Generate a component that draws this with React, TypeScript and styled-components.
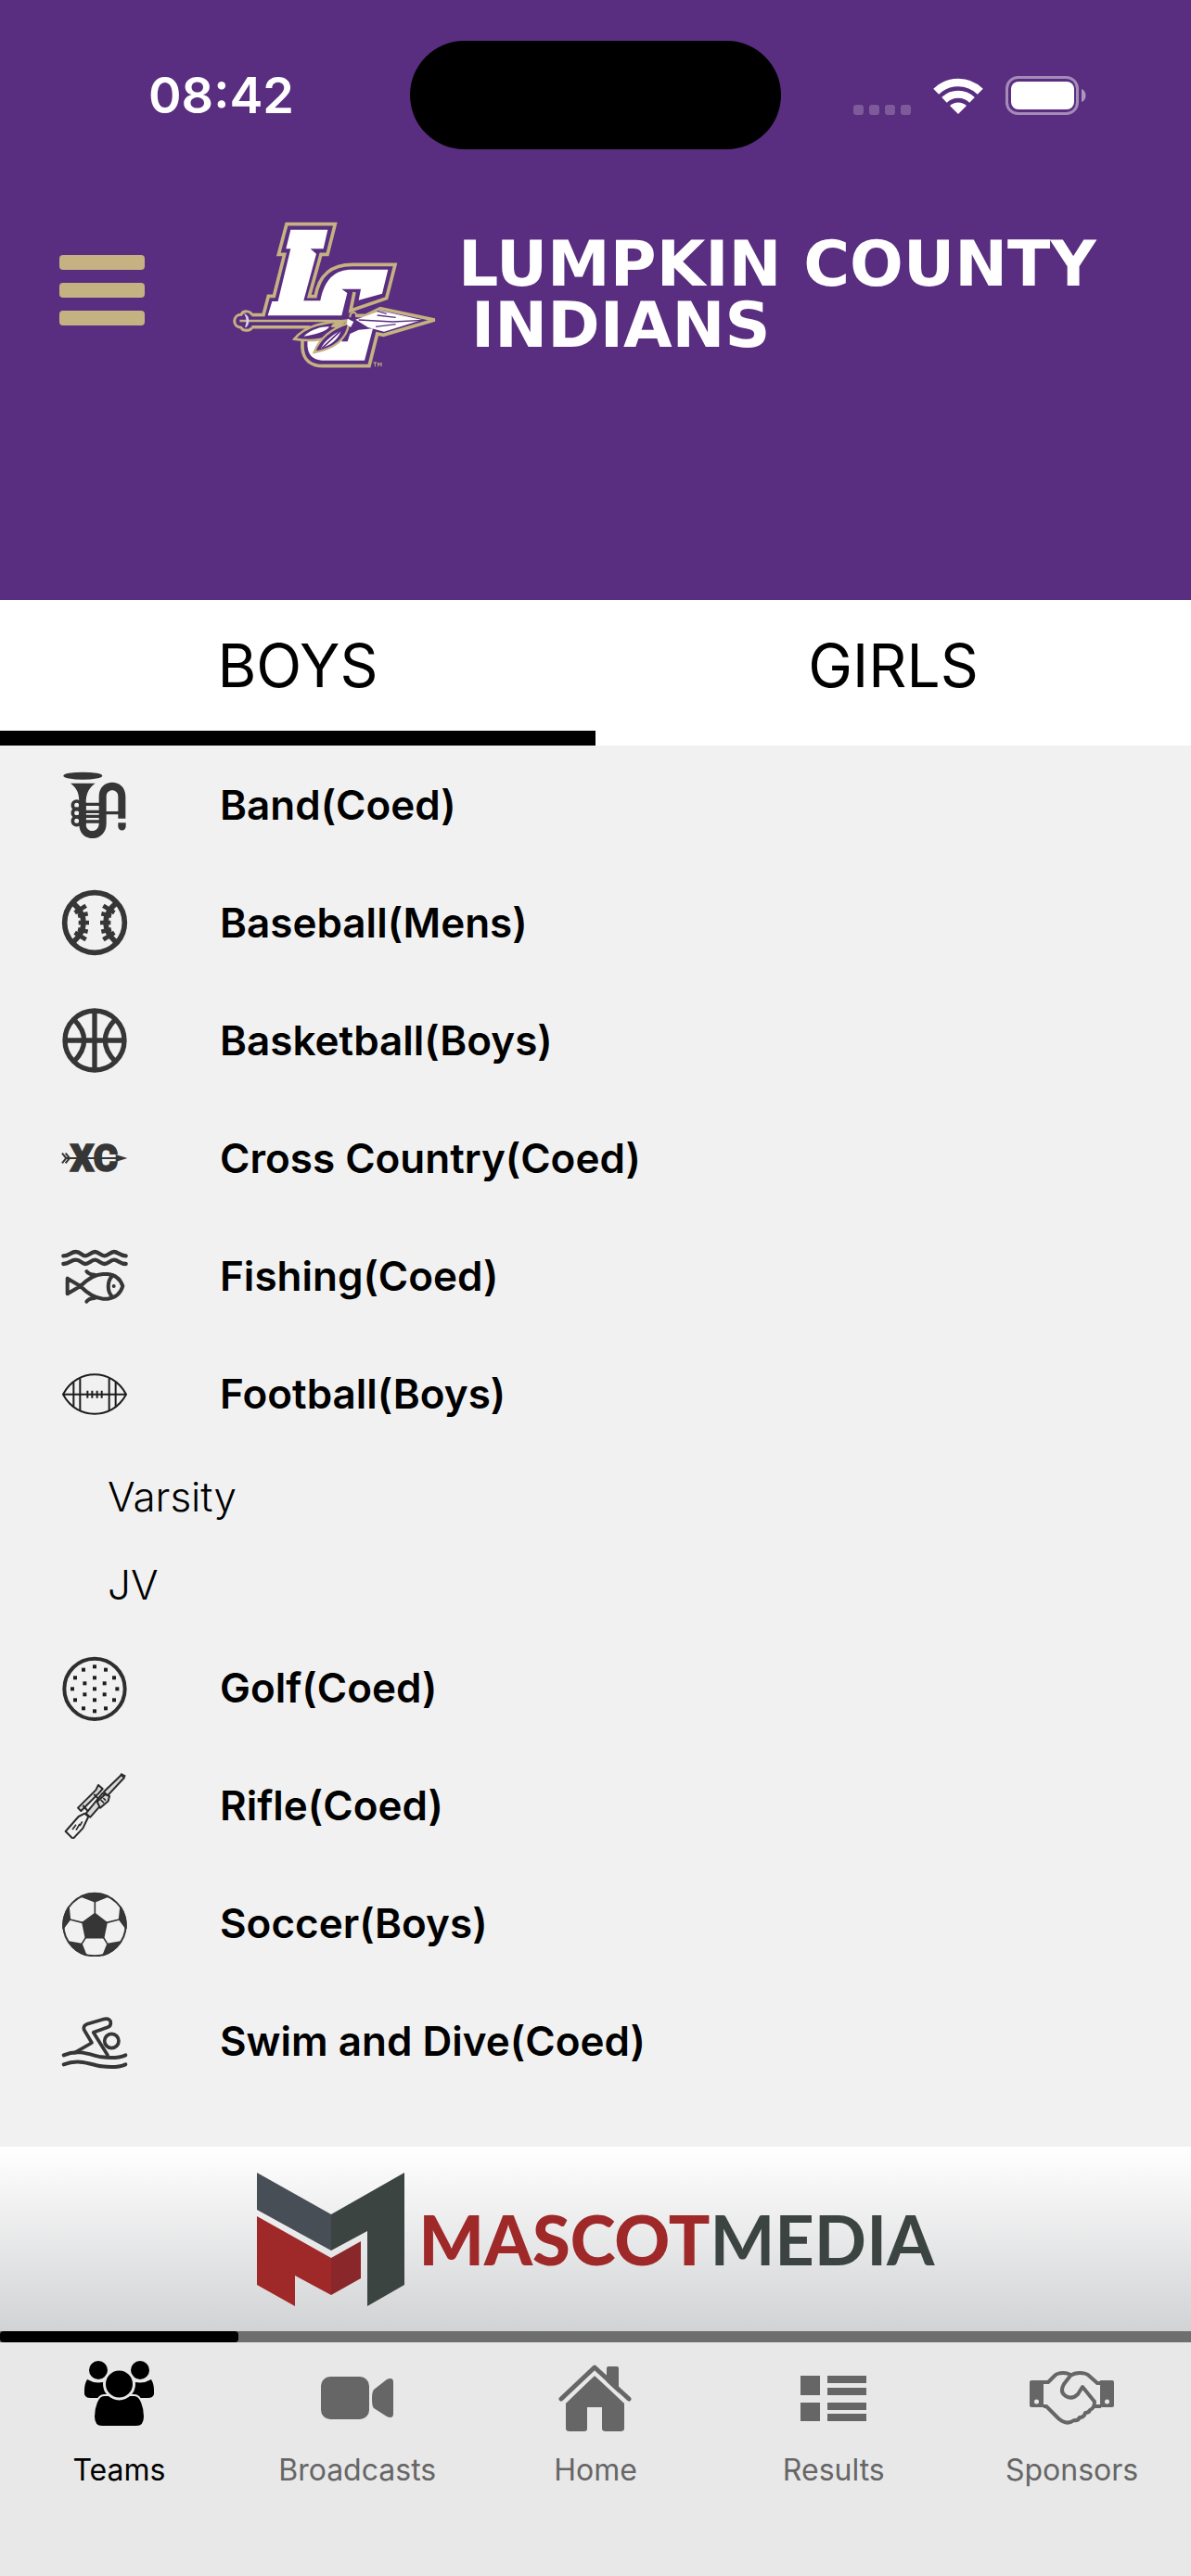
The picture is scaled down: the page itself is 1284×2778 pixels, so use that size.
import React, { FC, ReactNode, useState } from 'react'
import styled, { createGlobalStyle } from 'styled-components'

const colors = {
  purple: '#592d7f',
  gold: '#c4b282',
  listBg: '#f1f1f1',
  barBg: '#e8e8e8',
  muted: '#666666',
  icon: '#363636'
}

const GlobalStyle = createGlobalStyle`
  body {
    margin: 0;
    font-family: Inter, 'Liberation Sans', sans-serif;
    color: #000;
    background-color: ${colors.listBg};
  }

  button {
    border: 0;
    padding: 0;
    background: none;
    color: inherit;
    font: inherit;
    cursor: pointer;
  }
`

/* Status bar icons */

const WifiIcon = () => (
  <svg width="54" height="41" viewBox="0 0 54 41" fill="none" stroke="#fff" aria-hidden>
    <path d="M3.2 15.8a34 34 0 0 1 47.6 0" strokeWidth="8.5" />
    <path d="M12 24.8a21.5 21.5 0 0 1 30 0" strokeWidth="8" />
    <path d="M27 40l-9-9a13 13 0 0 1 18 0z" fill="#fff" stroke="none" />
  </svg>
)

const BatteryIcon = () => (
  <svg width="87" height="42" viewBox="0 0 87 42" aria-hidden>
    <rect x="1.5" y="1.5" width="76" height="39" rx="12" fill="none" stroke="#fff" strokeOpacity=".45" strokeWidth="3" />
    <rect x="6" y="6" width="68" height="30" rx="8" fill="#fff" />
    <path d="M82 14c6 2 6 12 0 14z" fill="#fff" fillOpacity=".5" />
  </svg>
)

/* Team logo */

const TeamLogo = () => (
  <svg width="240" height="180" viewBox="0 0 720 540" fill="none" strokeLinejoin="miter" role="img" aria-label="LC">
    <g stroke={colors.gold} strokeWidth="11">
      <path d="M94 344H132L148 283H166L200 148H181L207 50H364L339 148H318L280 284H300C312 215 350 181 420 181H558L530 290L414 330L426 270" />
      <path d="M94 383H275L258 425V450C260 488 285 509 325 509H474L500 405L520 409L686 360L510 323L462 346H430" />
    </g>
    <path
      d="M146 346L160 300H179L220 130H205L220 68H340L326 130H284L303 146L262 298H316C330 228 362 197 420 197H535L516 275L440 296L447 260H385L403 273L385 346z"
      fill="#fff"
    />
    <path d="M275 425C270 470 290 491 330 491H459L486 388L440 392L412 405L404 430H385L400 380z" fill="#fff" />
    <path d="M60 350H405V378H60z" fill={colors.purple} />
    <path d="M55 363H380" stroke={colors.gold} strokeWidth="8" />
    <path
      d="M94 344C92 330 66 328 60 343C32 343 30 383 60 385C66 398 92 396 94 384"
      stroke={colors.gold}
      strokeWidth="9"
    />
    <path d="M74 344C86 352 86 374 74 383C80 370 80 356 74 344z" fill="#fff" stroke="#d9d0ee" strokeWidth="4" />
    <path d="M232 422C270 375 330 368 405 362C385 410 320 436 232 422z" fill={colors.purple} stroke={colors.gold} strokeWidth="8" />
    <path d="M262 413C290 388 325 380 345 382C335 398 300 408 262 413z" fill="#fff" />
    <path d="M350 383C355 366 380 362 402 364L375 385z" fill={colors.gold} />
    <path d="M296 465C315 415 360 385 408 370C404 420 360 455 296 465z" fill={colors.purple} stroke={colors.gold} strokeWidth="7" />
    <path d="M318 452C330 428 356 408 384 394C372 425 350 442 318 452z" fill="#fff" />
    <path d="M322 451L385 392M300 414L350 388" stroke={colors.purple} strokeWidth="5" />
    <path d="M430 359L470 345L510 330L645 360L522 398L470 384z" fill="#fff" />
    <path d="M440 360L550 366L650 361M500 345L560 352M495 382L560 374M500 331L530 340" stroke={colors.purple} strokeWidth="4" />
    <path d="M404 356L424 366L414 384L402 374z" fill="#fff" />
    <path d="M412 352C412 332 436 330 432 350" stroke={colors.gold} strokeWidth="6" />
    <path d="M487 498H499M493 498V511M503 511V498L508 506L513 498V511" stroke={colors.gold} strokeWidth="3" />
  </svg>
)

/* Sport icons, all drawn on the same 216 grid */

const BandIcon = () => (
  <g>
    <ellipse cx="70" cy="14" rx="63" ry="12" fill={colors.icon} />
    <path d="M30 38H110C88 54 80 74 80 100V170C80 200 122 200 122 168V80C122 20 208 20 208 80V152H184V80C184 54 146 54 146 80V168C146 232 58 232 58 172V100C58 74 54 56 30 38z" fill={colors.icon} />
    <path d="M76 106H130M76 130H130M76 145H130M76 162H130M144 134H188" stroke={colors.icon} strokeWidth="10" />
    <path d="M184 166H209V178A12 12 0 0 1 184 178z" fill={colors.icon} />
    <circle cx="50" cy="109" r="13" fill="none" stroke={colors.icon} strokeWidth="11" />
    <circle cx="50" cy="134" r="13" fill="none" stroke={colors.icon} strokeWidth="11" />
    <circle cx="50" cy="160" r="13" fill="none" stroke={colors.icon} strokeWidth="11" />
    <path d="M58 100H80V174H58z" fill={colors.icon} />
  </g>
)

const BaseballIcon = () => (
  <g fill="none" stroke={colors.icon}>
    <circle cx="108" cy="108" r="97" strokeWidth="17" />
    <path d="M36 42C84 84 84 132 36 174M180 42C132 84 132 132 180 174" strokeWidth="17" />
    <path
      d="M80 53L44 76M86 79L54 86M56 108H90M86 137L54 130M80 163L44 140M136 53L172 76M130 79L162 86M160 108H126M130 137L162 130M136 163L172 140"
      strokeWidth="14"
    />
  </g>
)

const BasketballIcon = () => (
  <g fill="none" stroke={colors.icon} strokeWidth="16">
    <circle cx="108" cy="108" r="96" />
    <path d="M108 12V204M12 108H204M41 40C85 84 85 132 41 176M175 40C131 84 131 132 175 176" />
  </g>
)

const CrossCountryIcon = () => (
  <g>
    <IconText x="106" y="151" textAnchor="middle">
      XC
    </IconText>
    <path d="M12 108H185" stroke={colors.icon} strokeWidth="6" />
    <path d="M3 92L16 108L3 124M14 92L27 108L14 124" fill="none" stroke={colors.icon} strokeWidth="6" />
    <path d="M176 96L214 108L176 120z" fill={colors.icon} />
  </g>
)

const FishingIcon = () => (
  <g fill="none" stroke={colors.icon} strokeWidth="13" strokeLinecap="round" strokeLinejoin="round">
    <path d="M7 43C27 43 30 30 47 30S66 43 78 43S96 30 109 30S128 43 140 43S158 30 171 30S190 43 209 43" />
    <path d="M7 69C27 69 30 56 47 56S66 69 78 69S96 56 109 56S128 69 140 69S158 56 171 56S190 69 209 69" />
    <path
      d="M62 141L20 116V166zC88 115 112 103 135 102H150C175 104 192 120 199 141C192 164 175 179 150 182H135C112 180 88 168 62 141z"
      strokeWidth="12"
    />
    <path d="M82 93C88 101 96 104 108 104M82 191C88 183 96 180 108 180M165 108C148 125 148 158 165 175" strokeWidth="12" />
    <circle cx="170" cy="141" r="6" fill={colors.icon} stroke="none" />
  </g>
)

const FootballIcon = () => (
  <g fill="none" stroke="#1d1d1d" strokeWidth="6">
    <path d="M6 110C30 65 70 46 108 46S186 65 210 110C186 155 146 173 108 173S30 155 6 110z" />
    <path d="M6 110H210M40 71V149M61 58V162M155 58V162M176 71V149M85 98V122M100 98V122M116 98V122M131 98V122" />
  </g>
)

const golfDimples = [
  [108, 40], [72, 50], [144, 50], [45, 76], [171, 76], [108, 76], [76, 94], [140, 94], [36, 112], [108, 112], [181, 112],
  [76, 130], [140, 130], [45, 148], [171, 148], [108, 148], [72, 175], [144, 175], [108, 184]
]

const GolfIcon = () => (
  <g>
    <circle cx="108" cy="112" r="98" fill="none" stroke="#2e2e2e" strokeWidth="12" />
    {golfDimples.map(([x, y]) => (
      <rect key={`${x}-${y}`} x={x - 6} y={y - 6} width="12" height="12" fill="#1d1d1d" />
    ))}
  </g>
)

const RifleIcon = () => (
  <g fill="#d8d8d8" stroke="#2a2a2a" strokeWidth="6" strokeLinejoin="round">
    <path d="M138 64L194 10L204 18L150 76z" />
    <path d="M192 6L208 14" />
    <path d="M80 134L134 68L150 82L94 146z" />
    <path d="M116 96L142 72L156 78L152 94L126 116z" />
    <path d="M54 116L112 58L120 42L134 54L122 68L64 126z" />
    <path d="M70 108L86 126M106 72L120 86" />
    <path d="M14 192L56 144L76 134L88 144L70 182L38 216z" fill={colors.listBg} />
    <path d="M36 186L48 170M48 188L60 168M60 174L68 160M128 90L138 100M136 84L144 92" strokeWidth="5" />
  </g>
)

const SoccerIcon = () => (
  <g stroke={colors.icon} strokeWidth="5" strokeLinejoin="round" fill={colors.icon}>
    <circle cx="108" cy="113" r="101" fill="none" strokeWidth="6" />
    <path d="M109 77L147 106L137 155H79L69 106z" />
    <path d="M109 77V38M147 106L188 96M137 155L150 176M79 155L66 176M69 106L28 96" fill="none" />
    <path d="M109 38L64 21Q108 1 152 21z" />
    <path d="M188 96L192 56Q212 84 210 125z" />
    <path d="M28 96L24 56Q4 84 6 125z" />
    <path d="M150 176L192 168Q172 200 136 211z" />
    <path d="M66 176L24 168Q44 200 80 211z" />
  </g>
)

const SwimIcon = () => (
  <g fill="none" stroke={colors.icon} strokeWidth="11" strokeLinecap="round" strokeLinejoin="round">
    <path d="M8 154C60 132 100 156 130 160S185 164 208 154" strokeWidth="12" />
    <path d="M8 184C60 164 100 186 130 190S185 194 208 184" strokeWidth="12" />
    <circle cx="163" cy="108" r="23" />
    <path d="M44 146L99 114L74 72Q70 58 84 53L140 37Q160 34 160 50Q160 60 150 64L104 80L150 154" />
  </g>
)

/* Bottom navigation icons */

const TeamsIcon = () => (
  <svg width="77" height="80" viewBox="0 0 77 80" fill="currentColor" aria-hidden>
    <circle cx="16" cy="10" r="10" />
    <circle cx="61" cy="10" r="10" />
    <path d="M4 20Q16 27 28 20V40H7Q0 40 1 32Q1 25 4 20zM73 20Q61 27 49 20V40H70Q77 40 76 32Q76 25 73 20z" />
    <path
      d="M22 37H55C62 37 66 50 66 60Q66 71 57 71H20Q11 71 11 60C11 50 15 37 22 37z"
      stroke={colors.barBg}
      strokeWidth="2"
    />
    <circle cx="38.5" cy="25" r="16" stroke={colors.barBg} strokeWidth="3" />
  </svg>
)

const BroadcastsIcon = () => (
  <svg width="79" height="46" viewBox="0 0 79 46" fill="currentColor" aria-hidden>
    <rect width="52" height="46" rx="10" />
    <path d="M57 14L71 3Q78 0 78 6V40Q78 46 71 43L57 34Q55 32 55 24Q55 16 57 14z" />
  </svg>
)

const HomeIcon = () => (
  <svg width="79" height="73" viewBox="0 0 79 73" fill="currentColor" aria-hidden>
    <path d="M52 24V4Q52 2 54 2H63Q65 2 65 4V32z" />
    <path d="M39 12L71 40V69Q71 72 67 72H51Q47 72 47 69V46H31V69Q31 72 28 72H12Q8 72 8 69V40z" />
    <path d="M6 41L39 9L73 41" fill="none" stroke={colors.barBg} strokeWidth="4" />
    <path d="M3 37L39 3L76 37" fill="none" stroke="currentColor" strokeWidth="5" strokeLinecap="round" strokeLinejoin="round" />
  </svg>
)

const ResultsIcon = () => (
  <svg width="71" height="49" viewBox="0 0 71 49" fill="currentColor" aria-hidden>
    <path d="M0 0H21V21H0zM0 29H21V49H0zM29 0H71V8H29zM29 13H71V21H29zM29 29H71V37H29zM29 41H71V49H29z" />
  </svg>
)

const SponsorsIcon = () => (
  <svg width="91" height="58" viewBox="0 0 91 58" fill="none" stroke="currentColor" strokeWidth="4" strokeLinejoin="round" aria-hidden>
    <path d="M2 10H15V39H2Q0 39 0 37V12Q0 10 2 10zM76 10H89Q91 10 91 12V37Q91 39 89 39H76z" fill="currentColor" stroke="none" />
    <path d="M14 12H20L27 5Q30 2 36 2Q42 2 45 5M15 38H18L31 51Q40 59 48 53Q52 54 54 50Q59 50 60 45Q64 45 65 42Q70 40 70 33L57 17L52 25Q46 31 39 27Q32 23 37 14L44 5Q48 2 54 2Q61 2 64 5L73 13H77M70 38H77" />
    <circle cx="7.5" cy="33" r="2.5" fill={colors.barBg} stroke="none" />
    <circle cx="83.5" cy="33" r="2.5" fill={colors.barBg} stroke="none" />
  </svg>
)

const MascotMark = () => (
  <svg width="159" height="144" viewBox="0 0 159 144" aria-hidden>
    <path d="M0 0L80 45V84L0 40z" fill="#484e55" />
    <path d="M80 45L159 0V121L119 144V63L80 84z" fill="#3c4442" />
    <path d="M0 47L80 92V132L41 111V144L0 121z" fill="#9f2829" />
    <path d="M80 92L112 74V114L80 132z" fill="#8a272b" />
  </svg>
)

interface Team {
  name: string
  Icon: FC
  levels?: string[]
}

const teams: Team[] = [
  { name: 'Band(Coed)', Icon: BandIcon },
  { name: 'Baseball(Mens)', Icon: BaseballIcon },
  { name: 'Basketball(Boys)', Icon: BasketballIcon },
  { name: 'Cross Country(Coed)', Icon: CrossCountryIcon },
  { name: 'Fishing(Coed)', Icon: FishingIcon },
  { name: 'Football(Boys)', Icon: FootballIcon, levels: ['Varsity', 'JV'] },
  { name: 'Golf(Coed)', Icon: GolfIcon },
  { name: 'Rifle(Coed)', Icon: RifleIcon },
  { name: 'Soccer(Boys)', Icon: SoccerIcon },
  { name: 'Swim and Dive(Coed)', Icon: SwimIcon }
]

const navItems: { label: string; icon: ReactNode }[] = [
  { label: 'Teams', icon: <TeamsIcon /> },
  { label: 'Broadcasts', icon: <BroadcastsIcon /> },
  { label: 'Home', icon: <HomeIcon /> },
  { label: 'Results', icon: <ResultsIcon /> },
  { label: 'Sponsors', icon: <SponsorsIcon /> }
]

const App: FC = () => {
  const [tab, setTab] = useState('BOYS')
  const [openTeam, setOpenTeam] = useState('Football(Boys)')
  const [screen, setScreen] = useState('Teams')

  return (
    <Page>
      <GlobalStyle />
      <Header>
        <StatusBar>
          <Time>08:42</Time>
          <Island />
          <StatusIcons>
            <SignalDots>
              <i />
              <i />
              <i />
              <i />
            </SignalDots>
            <WifiIcon />
            <BatteryIcon />
          </StatusIcons>
        </StatusBar>
        <Brand>
          <MenuButton aria-label="Menu">
            <span />
            <span />
            <span />
          </MenuButton>
          <TeamLogo />
          <SchoolName>
            <span>LUMPKIN COUNTY</span>
            <Mascot>INDIANS</Mascot>
          </SchoolName>
        </Brand>
      </Header>

      <Tabs role="tablist">
        {['BOYS', 'GIRLS'].map((name) => (
          <Tab key={name} role="tab" aria-selected={tab === name} $active={tab === name} onClick={() => setTab(name)}>
            {name}
          </Tab>
        ))}
      </Tabs>

      <TeamList>
        {teams.map(({ name, Icon, levels }) => (
          <li key={name}>
            <TeamRow onClick={() => setOpenTeam(openTeam === name ? '' : name)}>
              <svg width="72" height="72" viewBox="0 0 216 216" aria-hidden>
                <Icon />
              </svg>
              {name}
            </TeamRow>
            {openTeam === name && levels?.map((level) => (
              <LevelLink key={level} href="#">
                {level}
              </LevelLink>
            ))}
          </li>
        ))}
      </TeamList>

      <Banner href="#">
        <MascotMark />
        <MascotName>
          <strong>MASCOT</strong>MEDIA
        </MascotName>
      </Banner>
      <NavProgress>
        <span />
      </NavProgress>
      <Nav>
        {navItems.map(({ label, icon }) => (
          <NavButton key={label} $active={screen === label} onClick={() => setScreen(label)}>
            <NavIcon>{icon}</NavIcon>
            {label}
          </NavButton>
        ))}
      </Nav>
    </Page>
  )
}

const Page = styled.div`
  display: flex;
  flex-direction: column;
  min-height: 100vh;
`

const Header = styled.header`
  padding: 44px 0 242px;
  background-color: ${colors.purple};
`

const StatusBar = styled.div`
  display: grid;
  grid-template-columns: 1fr 400px 1fr;
  align-items: center;
  color: #fff;
`

const Time = styled.time`
  padding-left: 160px;
  font-size: 54px;
  font-weight: 600;
  line-height: 64px;
`

const Island = styled.div`
  height: 117px;
  border-radius: 60px;
  background-color: #000;
`

const StatusIcons = styled.div`
  display: flex;
  align-items: flex-end;
  justify-content: flex-end;
  gap: 24px;
  padding-right: 113px;
`

const SignalDots = styled.div`
  display: flex;
  gap: 6px;

  i {
    width: 11px;
    height: 11px;
    border-radius: 3px;
    background-color: rgba(255, 255, 255, 0.22);
  }
`

const Brand = styled.div`
  display: flex;
  align-items: center;
  padding: 64px 64px 0;
`

const MenuButton = styled.button`
  display: grid;
  gap: 14px;
  width: 92px;
  margin-right: 84px;
  padding-bottom: 4px;

  span {
    height: 16px;
    border-radius: 4px;
    background-color: ${colors.gold};
  }
`

const SchoolName = styled.h1`
  display: grid;
  margin: 0 0 0 14px;
  padding-top: 6px;
  color: #fff;
  font-family: 'DejaVu Sans', sans-serif;
  font-size: 68px;
  font-weight: 700;
  line-height: 66px;
  white-space: nowrap;
`

const Mascot = styled.span`
  padding-left: 14px;
`

const Tabs = styled.div`
  display: flex;
  background-color: #fff;
`

const Tab = styled.button<{ $active: boolean }>`
  flex: 1;
  height: 157px;
  border-bottom: 16px solid ${({ $active }) => ($active ? '#000' : 'transparent')};
  font-size: 64px;
`

const TeamList = styled.ul`
  flex: 1;
  margin: 0;
  padding: 0;
  list-style: none;
`

const TeamRow = styled.button`
  display: flex;
  align-items: center;
  gap: 99px;
  width: 100%;
  height: 127px;
  padding-left: 66px;
  font-size: 44px;
  font-weight: 600;
`

const LevelLink = styled.a`
  display: flex;
  align-items: center;
  height: 95px;
  padding-left: 116px;
  color: inherit;
  font-size: 44px;
  font-weight: 300;
  text-decoration: none;
`

const IconText = styled.text`
  fill: ${colors.icon};
  stroke: ${colors.icon};
  stroke-width: 5px;
  font-family: Roboto, 'Liberation Sans', sans-serif;
  font-size: 120px;
  font-weight: 900;
`

const Banner = styled.a`
  display: flex;
  align-items: center;
  justify-content: center;
  gap: 16px;
  height: 199px;
  background-image: linear-gradient(#fff, #d2d3d5);
  text-decoration: none;
`

const MascotName = styled.span`
  color: #3c4442;
  font-family: Lato, 'Open Sans', sans-serif;
  font-size: 74px;
  font-weight: 700;

  strong {
    color: #9f2829;
    font-weight: 900;
  }
`

const NavProgress = styled.div`
  height: 12px;
  background-color: #6e6e6e;

  span {
    display: block;
    width: 20%;
    height: 12px;
    border-radius: 4px;
    background-color: #000;
  }
`

const Nav = styled.nav`
  display: flex;
  height: 252px;
  background-color: ${colors.barBg};
`

const NavButton = styled.button<{ $active: boolean }>`
  display: flex;
  flex: 1;
  flex-direction: column;
  align-items: center;
  padding-top: 16px;
  color: ${({ $active }) => ($active ? '#000' : colors.muted)};
  font-size: 32px;
  line-height: 40px;
`

const NavIcon = styled.span`
  display: flex;
  align-items: center;
  height: 88px;
  margin-bottom: 14px;
`

export default App
